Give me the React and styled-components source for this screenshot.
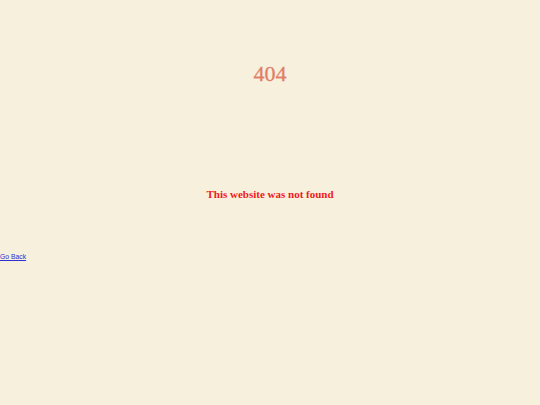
import React from 'react'
import styled, { createGlobalStyle } from 'styled-components'

const GlobalStyle = createGlobalStyle`
  html, body {
    margin: 0;
    padding: 0;
    background: #f6f0dd;
  }
`

const Page = styled.div`
  min-height: 405px;
  display: flex;
  flex-direction: column;
  font-family: "Liberation Serif", "DejaVu Serif", serif;
`

const Code = styled.h1`
  margin: 0;
  padding-top: 59px;
  height: 30px;
  line-height: 30px;
  text-align: center;
  font-size: 22px;
  font-weight: 400;
  color: #e07e66;
  -webkit-text-stroke: 0.3px #e07e66;
`

const Message = styled.h2`
  margin: 0;
  margin-top: 95px;
  height: 20px;
  line-height: 20px;
  text-align: center;
  font-size: 11px;
  font-weight: 700;
  color: #f01b1b;
`

const Back = styled.a`
  display: block;
  margin-top: 48px;
  align-self: flex-start;
  font-family: "Liberation Sans", Arial, sans-serif;
  font-size: 6.8px;
  line-height: 10px;
  color: #2e2ed6;
  text-decoration: underline;
`

const App = () => {
  return (
    <>
      <GlobalStyle />
      <Page>
        <Code>404</Code>
        <Message>This website was not found</Message>
        <Back href="#">Go Back</Back>
      </Page>
    </>
  )
}

export default App
